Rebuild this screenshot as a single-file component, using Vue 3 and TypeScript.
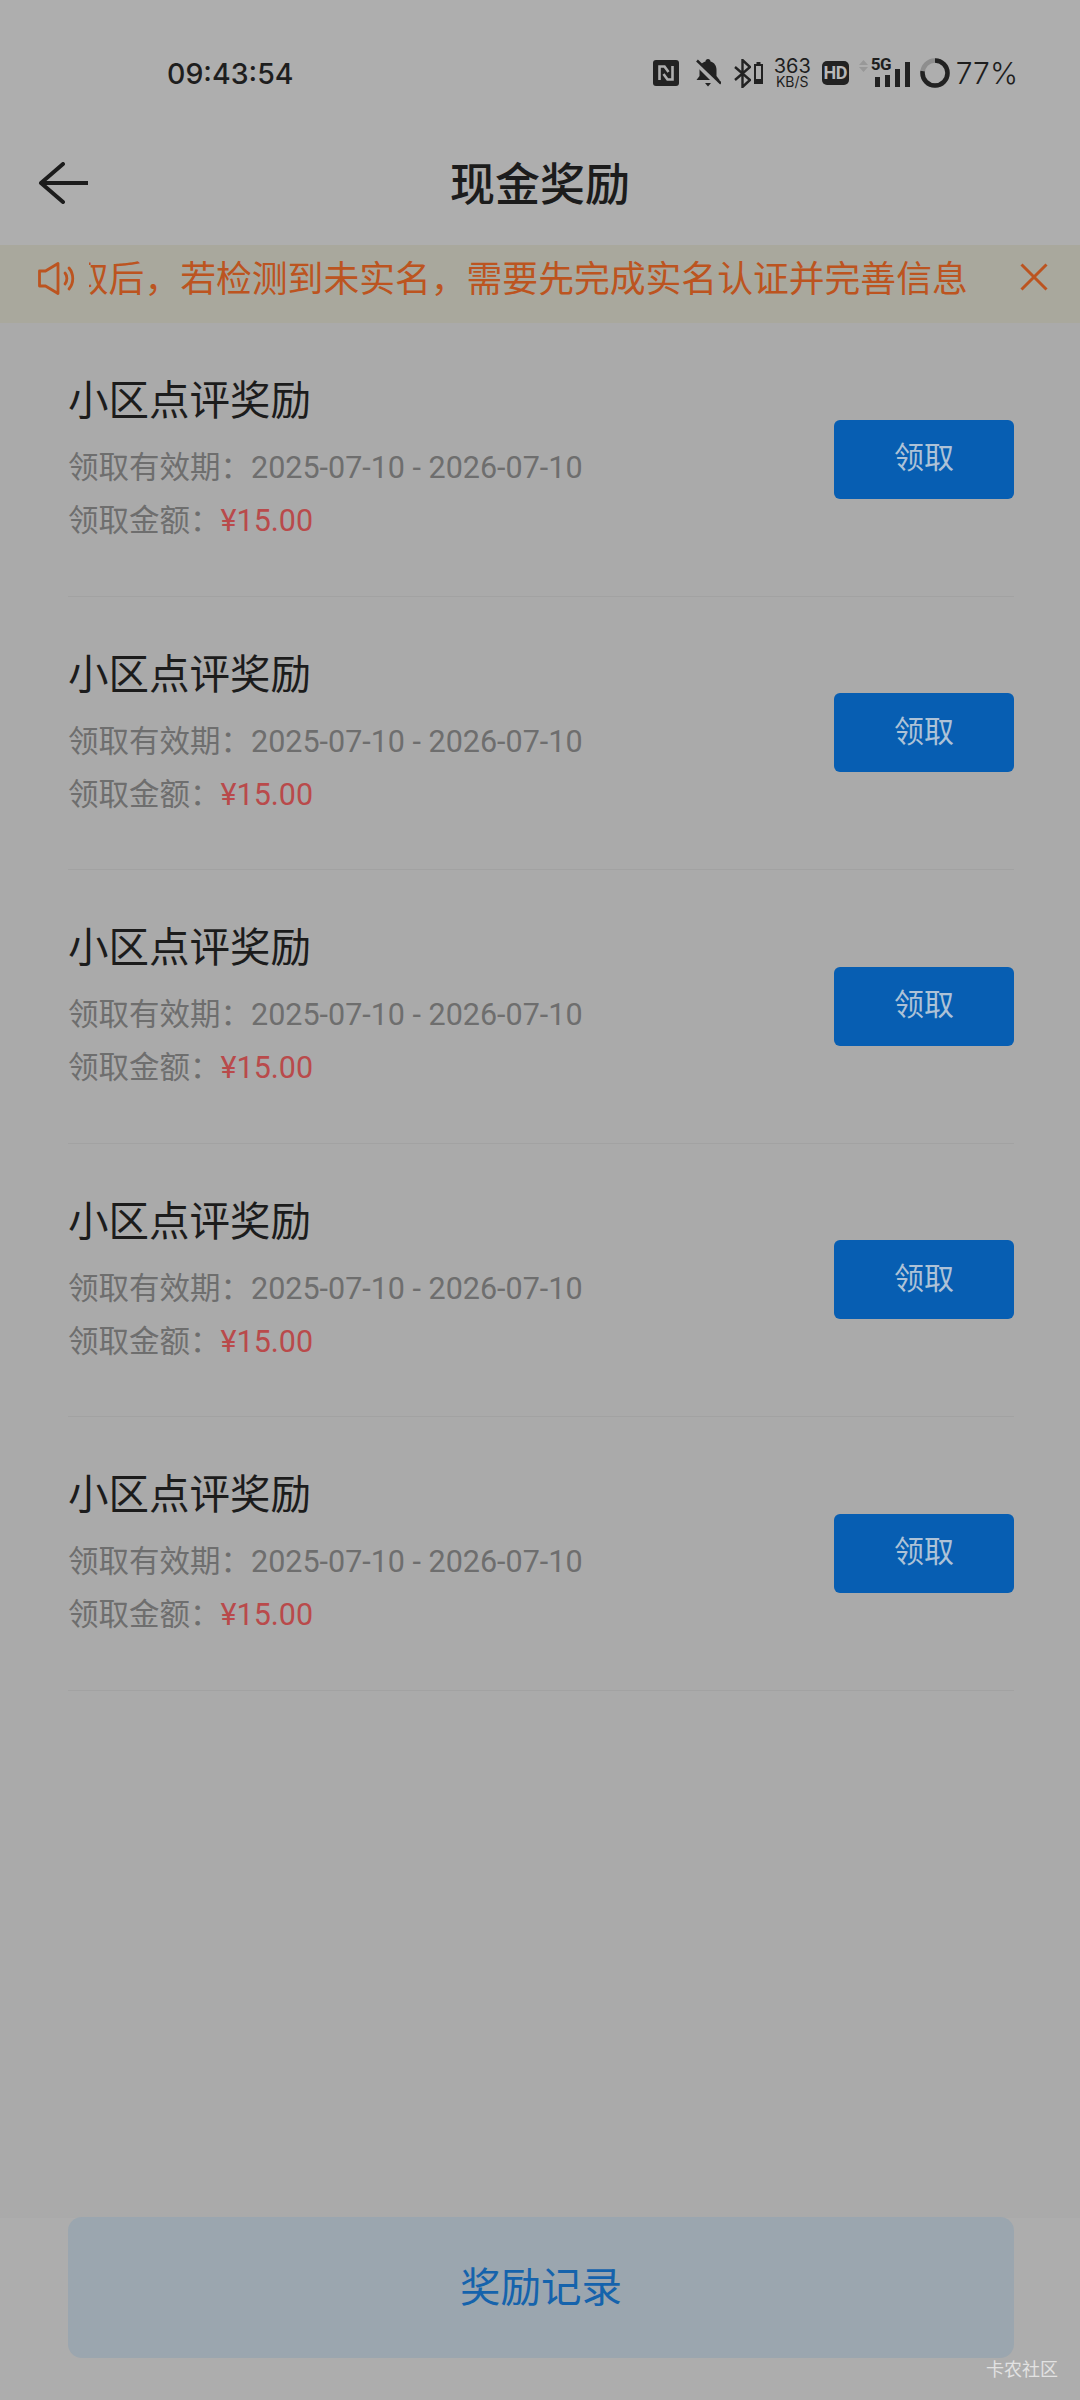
<script setup lang="ts">
interface Reward {
  id: number
  name: string
  period: string
  amount: string
}

const rewards: Reward[] = [1, 2, 3, 4, 5].map((id) => ({
  id,
  name: '小区点评奖励',
  period: '2025-07-10 - 2026-07-10',
  amount: '¥15.00',
}))
</script>

<template>
  <div class="page">
    <header class="top">
      <div class="status">
        <span class="time">09:43:54</span>
        <div class="status-icons">
          <svg width="26" height="26" viewBox="0 0 26 26">
            <rect width="26" height="26" rx="3" fill="#222" />
            <path d="M6.500 20V6.500h5l4 5.500M19.500 6v13.500h-5l-4-5.500" fill="none" stroke="#aeaeae" stroke-width="2.600" />
          </svg>
          <svg class="ic-bell" width="26" height="28" viewBox="0 0 26 28">
            <path d="M13 0c1.500 0 2.500 1 2.500 2.500 4 1 6 4.500 6 8.500v6l3 4H1.500l3-4v-6c0-4 2-7.500 6-8.500C10.500 1 11.500 0 13 0z" fill="#222" />
            <path d="M10 24h6l-3 3.500z" fill="#222" />
            <path d="M1 3l23 23" stroke="#aeaeae" stroke-width="5.500" />
            <path d="M2 1.500l24 23" stroke="#222" stroke-width="2.500" />
          </svg>
          <div class="bt-wrap">
            <svg width="17" height="29" viewBox="0 0 17 29">
              <path d="M1 8l15 13-7.500 7V1L16 8 1 21" fill="none" stroke="#222" stroke-width="2.400" />
            </svg>
            <svg width="9" height="22" viewBox="0 0 9 22">
              <rect x="2.500" width="4" height="3" fill="#222" />
              <rect x="1" y="3" width="7" height="18" fill="none" stroke="#222" stroke-width="2" />
              <rect x="1" y="17" width="7" height="4" fill="#222" />
            </svg>
          </div>
          <div class="speed">
            <span class="speed-num">363</span>
            <span class="speed-unit">KB/S</span>
          </div>
          <span class="hd">HD</span>
          <div class="signal">
            <svg class="arrows" width="9" height="12" viewBox="0 0 9 12">
              <path d="M4.500 0l4.500 5H0zM4.500 12L9 7H0z" fill="#989898" />
            </svg>
            <span class="net">5G</span>
            <div class="bars">
              <i class="bar b1"></i>
              <i class="bar b2"></i>
              <i class="bar b3"></i>
              <i class="bar b4"></i>
            </div>
          </div>
          <svg width="30" height="30" viewBox="0 0 30 30">
            <circle cx="15" cy="15" r="12.500" fill="none" stroke="#8e8e8e" stroke-width="4.500" />
            <circle cx="15" cy="15" r="12.500" fill="none" stroke="#222" stroke-width="4.500" stroke-dasharray="60.500 78.500" transform="rotate(-90 15 15)" />
          </svg>
          <span class="battery">77%</span>
        </div>
      </div>
      <nav class="nav">
        <svg class="back" width="50" height="42" viewBox="0 0 50 42">
          <path d="M25 2L3 21l22 19M3 21h47" fill="none" stroke="#1c1c1c" stroke-width="4" stroke-linecap="round" stroke-linejoin="round" />
        </svg>
        <h1 class="title">现金奖励</h1>
      </nav>
    </header>

    <div class="notice">
      <svg class="speaker" width="40" height="33" viewBox="0 0 40 33">
        <path d="M1.500 9h6L20 1.500v30L7.500 24h-6z" fill="none" stroke="#bc5420" stroke-width="2.800" stroke-linejoin="round" />
        <path d="M27 11c2.500 3 2.500 8 0 11M31 6c5 6 5 15 0 21" fill="none" stroke="#bc5420" stroke-width="2.800" stroke-linecap="round" />
      </svg>
      <div class="notice-track">
        <span class="notice-text">领取后，若检测到未实名，需要先完成实名认证并完善信息</span>
      </div>
      <svg class="close" width="28" height="28" viewBox="0 0 28 28">
        <path d="M1.500 1.500l25 25M26.500 1.500l-25 25" fill="none" stroke="#bc5420" stroke-width="3" />
      </svg>
    </div>

    <main class="list">
      <section v-for="item in rewards" :key="item.id" class="row">
        <div class="info">
          <div class="name">{{ item.name }}</div>
          <div class="line">领取有效期：<span class="value">{{ item.period }}</span></div>
          <div class="line">领取金额：<span class="amount">{{ item.amount }}</span></div>
        </div>
        <button class="claim" type="button">领取</button>
      </section>
    </main>

    <footer class="footer">
      <button class="records" type="button">奖励记录</button>
      <span class="watermark">卡农社区</span>
    </footer>
  </div>
</template>

<style>
html,
body {
  margin: 0;
  background: #ababab;
}
</style>

<style scoped>
.page {
  position: relative;
  display: flex;
  flex-direction: column;
  width: 1080px;
  height: 2400px;
  overflow: hidden;
  background: #aaaaaa;
  font-family: 'Roboto', 'Noto Sans CJK SC', sans-serif;
}

.top {
  height: 245px;
  background: #aeaeae;
}

.status {
  display: flex;
  align-items: center;
  justify-content: space-between;
  height: 60px;
  padding: 43px 62px 0 167px;
  color: #1e1e1e;
}

.time {
  font-family: 'Inter', sans-serif;
  font-size: 28.5px;
  font-weight: 500;
}

.status-icons {
  display: flex;
  align-items: center;
  gap: 12px;
}

.ic-bell {
  margin-left: 4px;
}

.bt-wrap {
  display: flex;
  align-items: center;
  gap: 3px;
  margin-left: 1px;
}

.speed {
  display: flex;
  flex-direction: column;
  align-items: center;
  width: 35px;
  color: #1e1e1e;
  font-family: 'Inter', sans-serif;
}

.speed-num {
  font-size: 20px;
  line-height: 18px;
}

.speed-unit {
  font-size: 14px;
  line-height: 14px;
}

.hd {
  width: 27px;
  height: 24px;
  border-radius: 5px;
  background: #222222;
  color: #b8b8b8;
  font-size: 18px;
  font-weight: 700;
  line-height: 24px;
  letter-spacing: -0.5px;
  text-align: center;
}

.signal {
  position: relative;
  flex: none;
  width: 51px;
  height: 30px;
  margin: 0 -2px;
}

.arrows {
  position: absolute;
  left: 0;
  top: 2px;
}

.net {
  position: absolute;
  left: 12px;
  top: -2px;
  font-size: 17px;
  font-weight: 700;
  line-height: 17px;
  letter-spacing: -0.5px;
  color: #1e1e1e;
}

.bars {
  position: absolute;
  right: 0;
  bottom: 1px;
  display: flex;
  align-items: flex-end;
  gap: 5px;
}

.bar {
  display: block;
  width: 5px;
  background: #222222;
}

.b1 {
  height: 10px;
}

.b2 {
  height: 12px;
}

.b3 {
  height: 18px;
}

.b4 {
  height: 25px;
}

.battery {
  margin-left: -6px;
  font-family: 'Inter', sans-serif;
  font-size: 30px;
  font-weight: 300;
  color: #1e1e1e;
}

.nav {
  position: relative;
  display: flex;
  align-items: center;
  justify-content: center;
  height: 80px;
  margin-top: 38px;
}

.back {
  position: absolute;
  left: 38px;
  top: 21px;
}

.title {
  margin: 0;
  font-size: 45px;
  font-weight: 500;
  color: #1c1c1c;
}

.notice {
  display: flex;
  align-items: center;
  height: 78px;
  padding: 0 32px 8px 38px;
  box-sizing: border-box;
  background: #a9a89d;
}

.speaker {
  flex: none;
  margin-right: 11px;
  margin-bottom: 4px;
}

.notice-track {
  flex: 1;
  min-width: 0;
  margin-bottom: 8px;
  overflow: hidden;
  white-space: nowrap;
}

.notice-text {
  display: inline-block;
  margin-left: -52px;
  font-size: 35.8px;
  color: #bc5420;
}

.close {
  flex: none;
  margin-bottom: 6px;
}

.list {
  flex: 1;
  padding: 0 66px 0 68px;
}

.row {
  display: flex;
  align-items: center;
  justify-content: space-between;
  height: 273.5px;
  box-sizing: border-box;
  border-bottom: 1px solid #a2a2a2;
}

.name {
  margin-bottom: 12px;
  padding-top: 2px;
  font-size: 40.5px;
  line-height: 56px;
  color: #1c1c1c;
}

.line {
  font-size: 30.5px;
  line-height: 53px;
  color: #6e6e6e;
}

.amount {
  color: #b94a4b;
}

.claim {
  width: 180px;
  height: 79px;
  padding: 0 0 8px;
  border: 0;
  border-radius: 6px;
  background: #075eb2;
  color: #adc2d7;
  font-family: inherit;
  font-size: 30px;
}

.footer {
  display: flex;
  height: 182px;
  padding-left: 68px;
  background: #adadad;
}

.records {
  width: 946px;
  height: 141px;
  margin-top: -1px;
  padding: 0 0 6px;
  border: 0;
  border-radius: 14px;
  background: #9ba6af;
  color: #1563ac;
  font-family: inherit;
  font-size: 40.5px;
}

.watermark {
  position: absolute;
  right: 22px;
  bottom: 21px;
  font-size: 18px;
  line-height: 18px;
  color: #e2e2e2;
}
</style>
